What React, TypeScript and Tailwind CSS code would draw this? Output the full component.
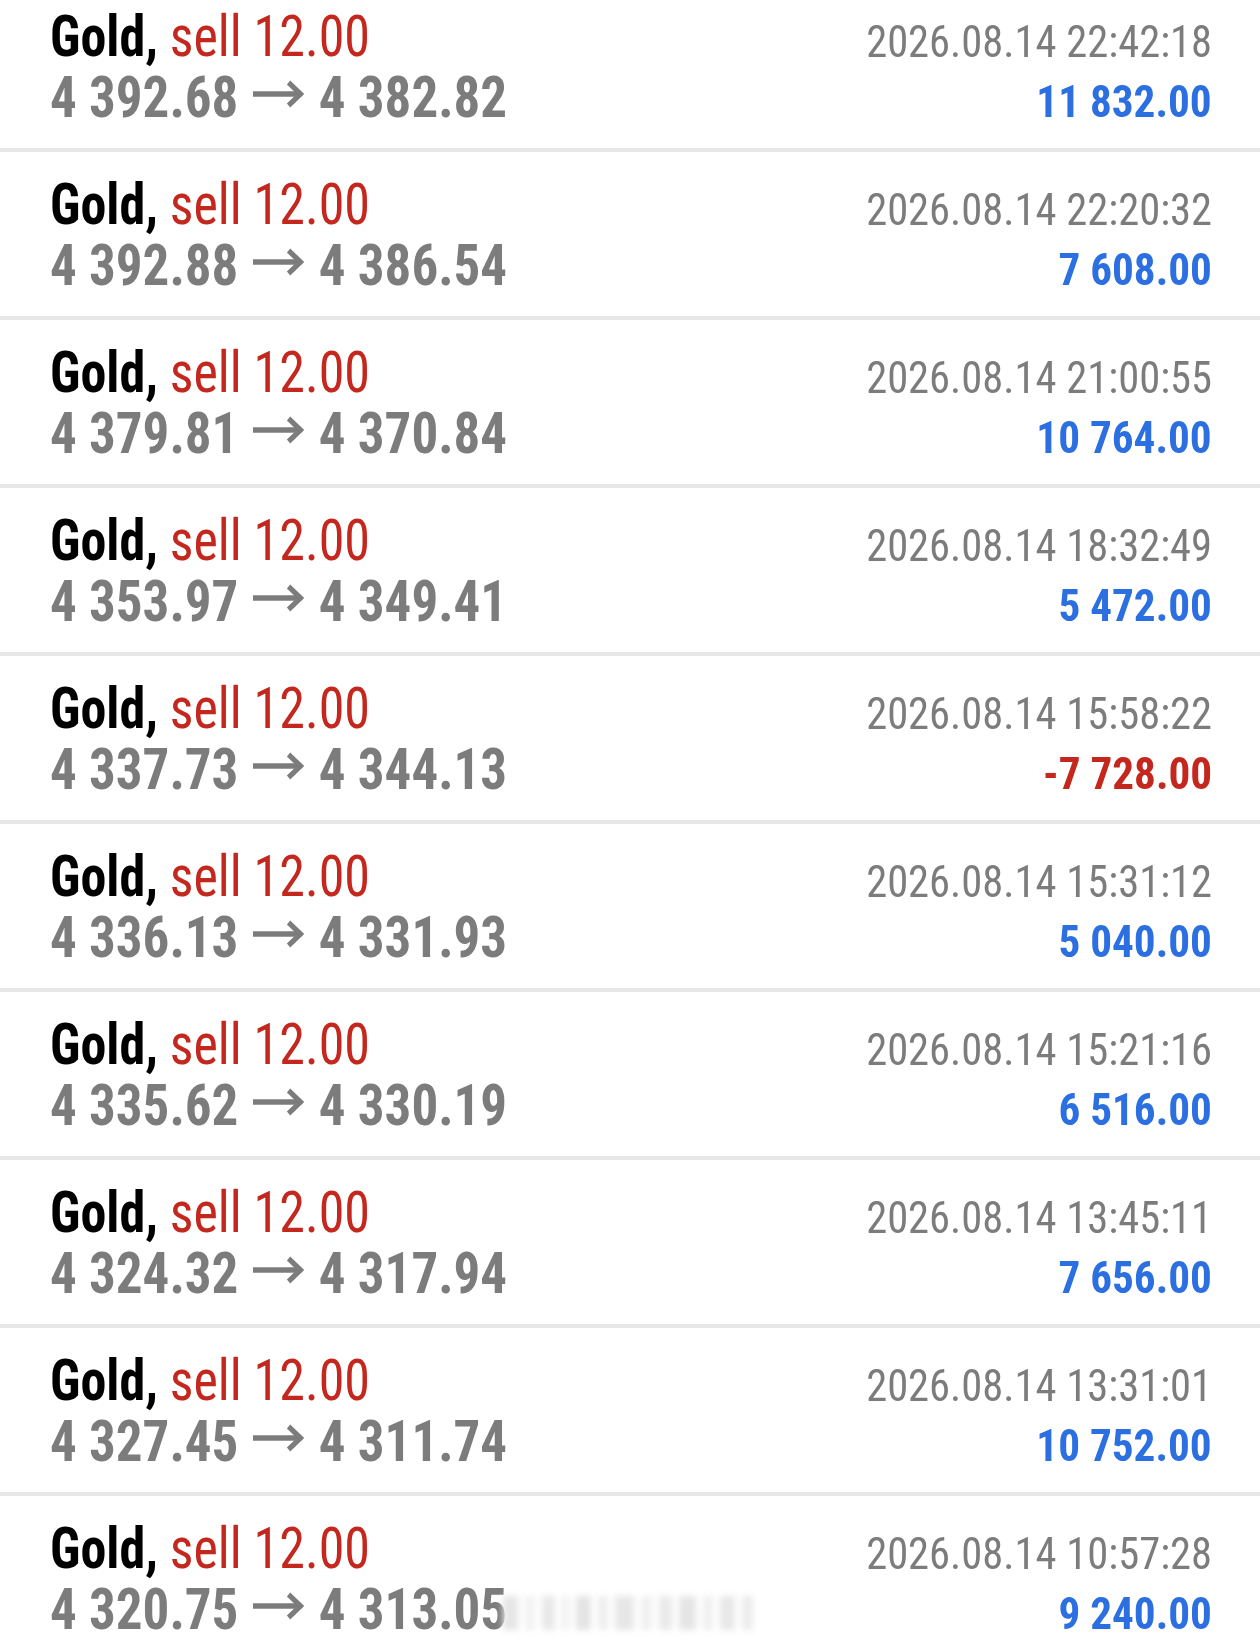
import React from "react";

type Row = { open: string; close: string; time: string; profit: string };

const rows: Row[] = [
  { open: "4 392.68", close: "4 382.82", time: "2026.08.14 22:42:18", profit: "11 832.00" },
  { open: "4 392.88", close: "4 386.54", time: "2026.08.14 22:20:32", profit: "7 608.00" },
  { open: "4 379.81", close: "4 370.84", time: "2026.08.14 21:00:55", profit: "10 764.00" },
  { open: "4 353.97", close: "4 349.41", time: "2026.08.14 18:32:49", profit: "5 472.00" },
  { open: "4 337.73", close: "4 344.13", time: "2026.08.14 15:58:22", profit: "-7 728.00" },
  { open: "4 336.13", close: "4 331.93", time: "2026.08.14 15:31:12", profit: "5 040.00" },
  { open: "4 335.62", close: "4 330.19", time: "2026.08.14 15:21:16", profit: "6 516.00" },
  { open: "4 324.32", close: "4 317.94", time: "2026.08.14 13:45:11", profit: "7 656.00" },
  { open: "4 327.45", close: "4 311.74", time: "2026.08.14 13:31:01", profit: "10 752.00" },
  { open: "4 320.75", close: "4 313.05", time: "2026.08.14 10:57:28", profit: "9 240.00" },
];

function Arrow() {
  return (
    <svg
      width="56"
      height="28"
      viewBox="0 0 56 28"
      className="mx-[16px] inline-block align-[0.16em]"
      fill="none"
      stroke="#7c7c7c"
      strokeWidth="5.5"
    >
      <path d="M0 14 H52" />
      <path d="M39 2.5 L52 14 L39 25.5" strokeLinejoin="miter" />
    </svg>
  );
}

function TradeRow({ r, last }: { r: Row; last: boolean }) {
  const neg = r.profit.startsWith("-");
  return (
    <div className="relative flex h-[168px] shrink-0 justify-between border-b-4 border-[#e7e7e7] pl-[50px] pr-[48px]">
      <div className="pt-[22px]">
        <div className="origin-left scale-x-[0.896] whitespace-nowrap text-[58px] leading-[61px]">
          <span className="font-bold text-[#000000]">Gold,</span>{" "}
          <span className="text-[#c4271e]">sell 12.00</span>
        </div>
        <div className="origin-left scale-x-[0.914] whitespace-nowrap text-[58px] font-bold leading-[61px] text-[#7c7c7c]">
          {r.open}
          <Arrow />
          {r.close}
        </div>
      </div>
      <div className="flex flex-col items-end pt-[28px]">
        <div className="origin-right scale-x-[0.945] whitespace-nowrap text-[45px] leading-[60px] text-[#7c7c7c]">
          {r.time}
        </div>
        <div
          className={
            neg
              ? "origin-right scale-x-[0.96] whitespace-nowrap text-[45px] font-bold leading-[60px] text-[#c4271e]"
              : "origin-right scale-x-[0.96] whitespace-nowrap text-[45px] font-bold leading-[60px] text-[#2b6fe0]"
          }
        >
          {r.profit}
        </div>
      </div>
      {last && (
        <div className="pointer-events-none absolute left-[503px] top-[100px] flex h-[34px] w-[250px] items-stretch gap-[7px] blur-[3px]">
          <div className="w-[16px] bg-[#e6e6e6]" />
          <div className="w-[10px] bg-[#f2f2f2]" />
          <div className="w-[14px] bg-[#e8e8e8]" />
          <div className="w-[8px] bg-[#f0f0f0]" />
          <div className="w-[16px] bg-[#e4e4e4]" />
          <div className="w-[10px] bg-[#eeeeee]" />
          <div className="w-[20px] bg-[#e7e7e7]" />
          <div className="w-[12px] bg-[#f0f0f0]" />
          <div className="w-[14px] bg-[#e9e9e9]" />
          <div className="w-[18px] bg-[#e5e5e5]" />
          <div className="w-[10px] bg-[#efefef]" />
          <div className="w-[16px] bg-[#e8e8e8]" />
          <div className="w-[12px] bg-[#ececec]" />
        </div>
      )}
    </div>
  );
}

export default function App() {
  return (
    <div
      className="h-[1644px] w-full overflow-hidden bg-white"
      style={{ fontFamily: '"Roboto Condensed", Roboto, sans-serif' }}
    >
      <div className="-mt-[16px] flex flex-col">
        {rows.map((r, i) => (
          <TradeRow key={i} r={r} last={i === rows.length - 1} />
        ))}
      </div>
    </div>
  );
}
